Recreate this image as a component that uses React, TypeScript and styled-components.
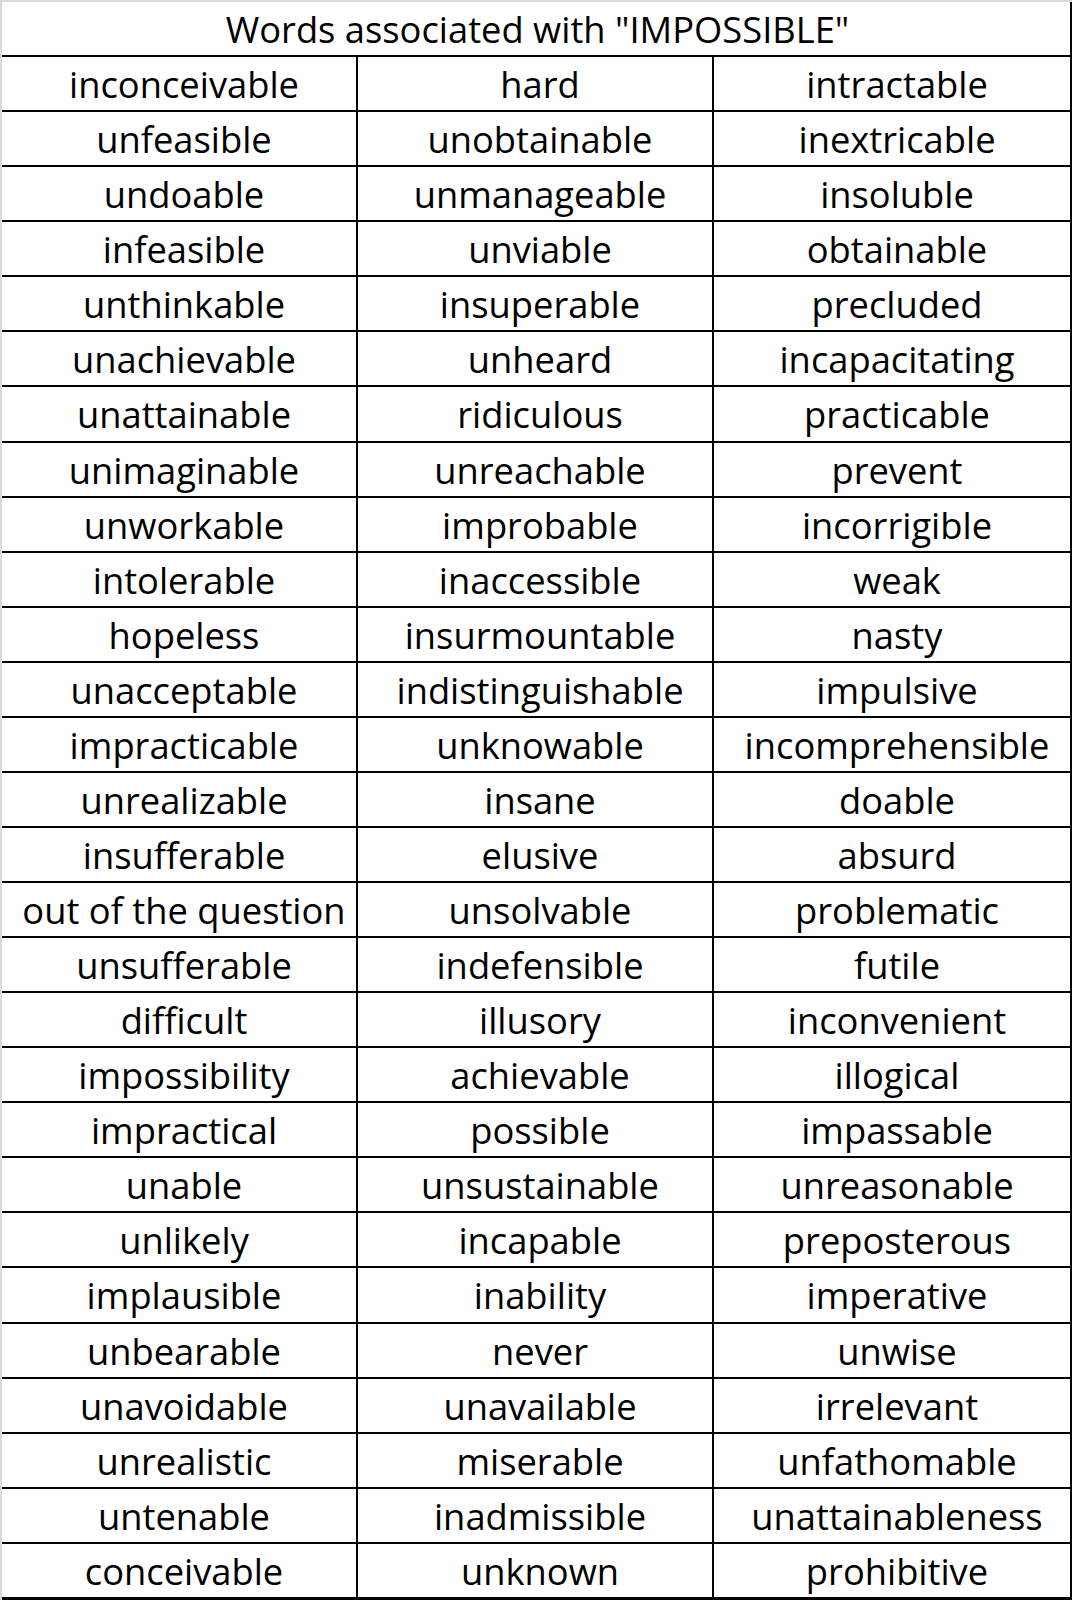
import React from 'react';
import styled, { createGlobalStyle } from 'styled-components';

const GlobalStyle = createGlobalStyle`
  html, body {
    margin: 0;
    padding: 0;
    background: #ffffff;
  }
  body {
    font-family: "Open Sans", "Noto Sans", sans-serif;
    color: #000000;
  }
`;

const Sheet = styled.div`
  width: 1072px;
  box-sizing: border-box;
  border-top: 2px solid #d9d9d9;
  border-left: 2px solid #d9d9d9;
`;

const Table = styled.div`
  display: grid;
  grid-template-columns: repeat(3, 1fr);
  border-right: 2px solid #000000;
  border-bottom: 2px solid #000000;
`;

const TitleCell = styled.div`
  grid-column: 1 / -1;
  height: 55.07px;
  box-sizing: border-box;
  padding-top: 2px;
  padding-left: 3px;
  border-bottom: 2px solid #000000;
  font-size: 36.3px;
  line-height: 51px;
  text-align: center;
  white-space: nowrap;
`;

const Cell = styled.div<{ $last: boolean }>`
  height: 55.07px;
  box-sizing: border-box;
  padding-top: 2px;
  padding-left: 10px;
  border-bottom: 2px solid #000000;
  border-right: ${(p) => (p.$last ? 'none' : '2px solid #000000')};
  font-size: 36.3px;
  line-height: 51px;
  text-align: center;
  white-space: nowrap;
`;

const words: [string, string, string][] = [
  ['inconceivable', 'hard', 'intractable'],
  ['unfeasible', 'unobtainable', 'inextricable'],
  ['undoable', 'unmanageable', 'insoluble'],
  ['infeasible', 'unviable', 'obtainable'],
  ['unthinkable', 'insuperable', 'precluded'],
  ['unachievable', 'unheard', 'incapacitating'],
  ['unattainable', 'ridiculous', 'practicable'],
  ['unimaginable', 'unreachable', 'prevent'],
  ['unworkable', 'improbable', 'incorrigible'],
  ['intolerable', 'inaccessible', 'weak'],
  ['hopeless', 'insurmountable', 'nasty'],
  ['unacceptable', 'indistinguishable', 'impulsive'],
  ['impracticable', 'unknowable', 'incomprehensible'],
  ['unrealizable', 'insane', 'doable'],
  ['insufferable', 'elusive', 'absurd'],
  ['out of the question', 'unsolvable', 'problematic'],
  ['unsufferable', 'indefensible', 'futile'],
  ['difficult', 'illusory', 'inconvenient'],
  ['impossibility', 'achievable', 'illogical'],
  ['impractical', 'possible', 'impassable'],
  ['unable', 'unsustainable', 'unreasonable'],
  ['unlikely', 'incapable', 'preposterous'],
  ['implausible', 'inability', 'imperative'],
  ['unbearable', 'never', 'unwise'],
  ['unavoidable', 'unavailable', 'irrelevant'],
  ['unrealistic', 'miserable', 'unfathomable'],
  ['untenable', 'inadmissible', 'unattainableness'],
  ['conceivable', 'unknown', 'prohibitive'],
];

export default function App() {
  return (
    <>
      <GlobalStyle />
      <Sheet>
        <Table>
          <TitleCell>Words associated with "IMPOSSIBLE"</TitleCell>
          {words.map((row, r) =>
            row.map((w, c) => (
              <Cell key={`${r}-${c}`} $last={c === 2}>
                {w}
              </Cell>
            ))
          )}
        </Table>
      </Sheet>
    </>
  );
}
